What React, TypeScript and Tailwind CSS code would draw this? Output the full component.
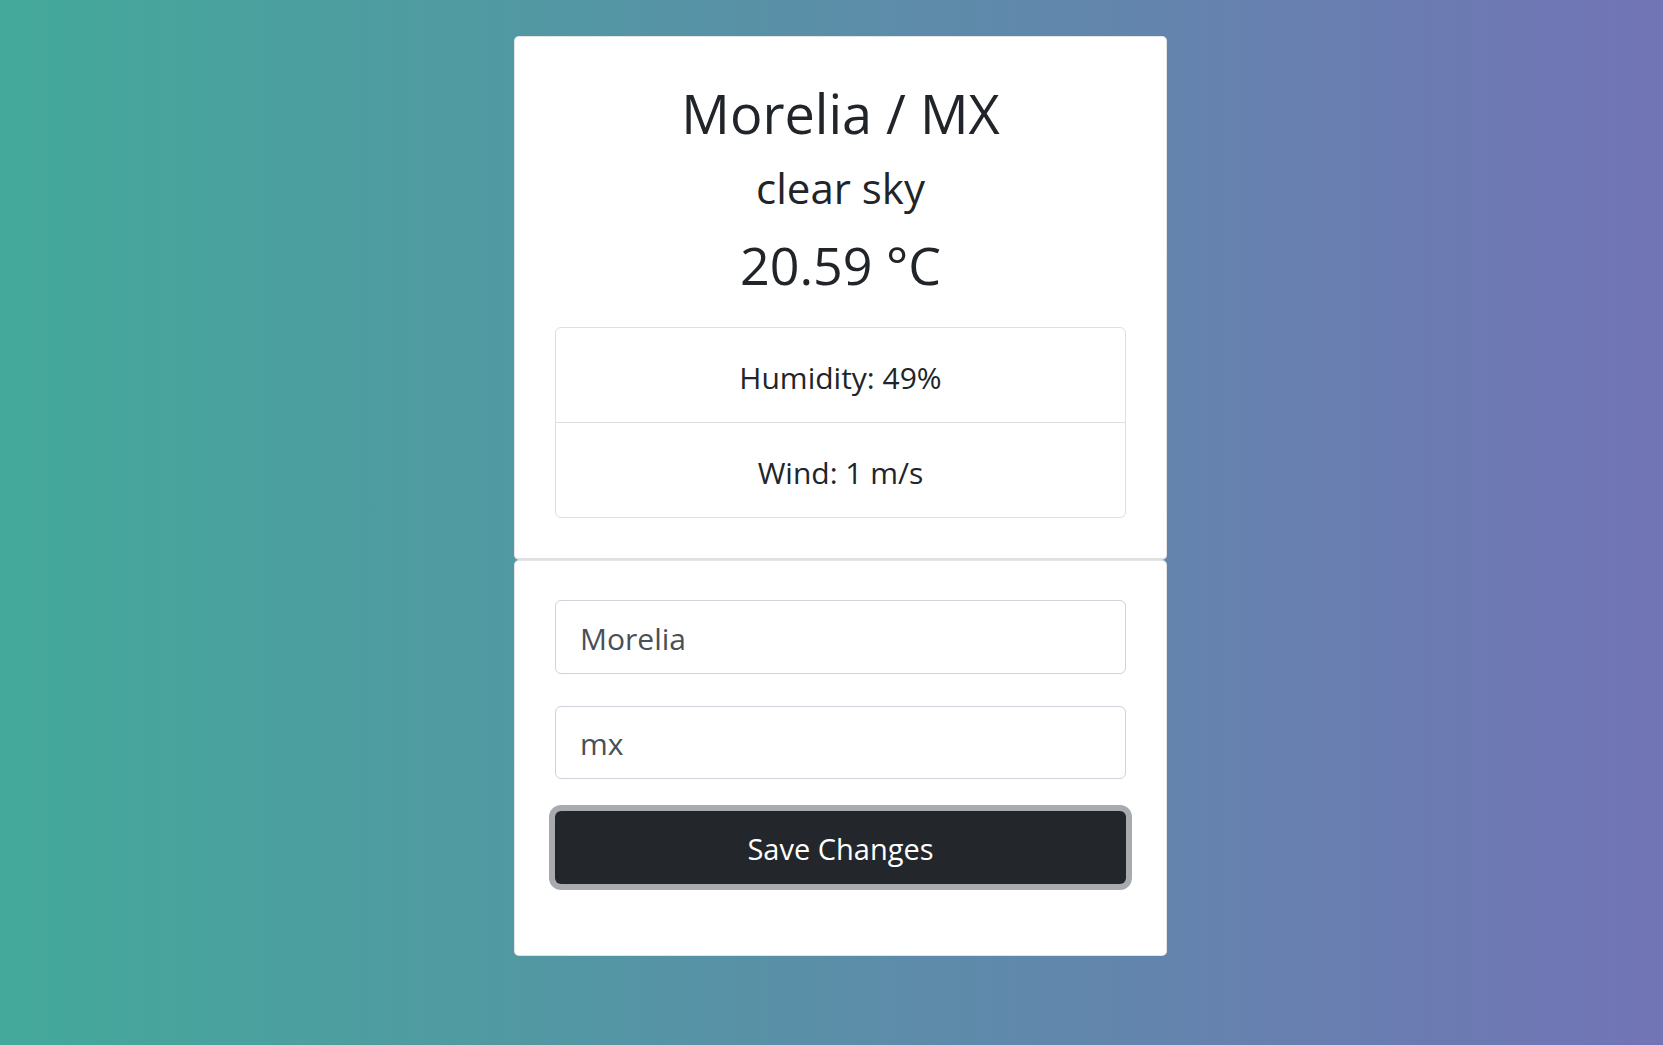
import React, { useState } from "react";

export default function App() {
  const [city, setCity] = useState("Morelia");
  const [country, setCountry] = useState("mx");

  return (
    <div
      className="min-h-screen w-full bg-[linear-gradient(to_right,#43a99a,#7274b6)] flex justify-center pl-[18px] pt-[36px]"
      style={{ fontFamily: '"Open Sans", "Noto Sans", sans-serif' }}
    >
      <div className="w-[653px] flex flex-col">
        {/* weather card */}
        <div className="bg-white rounded-[5px] border border-black/10 border-b-2 border-b-[#dfe0e1] px-[40px] pt-[44px] pb-[40px] flex flex-col items-center text-[#212529]">
          <h1 className="text-[54px] leading-[65px]">Morelia / MX</h1>
          <h3 className="mt-[17px] text-[42px] leading-[50px]">clear sky</h3>
          <h2 className="mt-[21px] text-[52px] leading-[62px]">20.59 °C</h2>
          <ul className="mt-[31px] w-full border border-[#dfdfdf] rounded-[6px]">
            <li className="h-[94px] pt-[6px] flex items-center justify-center text-[30px] leading-[36px]">Humidity: 49%</li>
            <li className="h-[95px] pt-[6px] border-t border-[#dfdfdf] flex items-center justify-center text-[30px] leading-[36px]">
              Wind: 1 m/s
            </li>
          </ul>
        </div>

        {/* form card */}
        <div className="bg-white rounded-[5px] border border-black/10 px-[40px] pt-[39px] pb-[71px] flex flex-col">
          <input
            value={city}
            onChange={(e) => setCity(e.target.value)}
            className="h-[74px] w-full border border-[#ced4da] rounded-[6px] px-[24px] pt-[2px] text-[30px] leading-[36px] text-[#495057] outline-none"
          />
          <input
            value={country}
            onChange={(e) => setCountry(e.target.value)}
            className="mt-[32px] h-[73px] w-full border border-[#ced4da] rounded-[6px] px-[24px] pt-[2px] text-[30px] leading-[36px] text-[#495057] outline-none"
          />
          <button className="mt-[32px] h-[73px] w-full rounded-[6px] bg-[#23272b] pt-[2px] text-white text-[29px] leading-[36px] shadow-[0_0_0_6px_#a8abae]">
            Save Changes
          </button>
        </div>
      </div>
    </div>
  );
}
